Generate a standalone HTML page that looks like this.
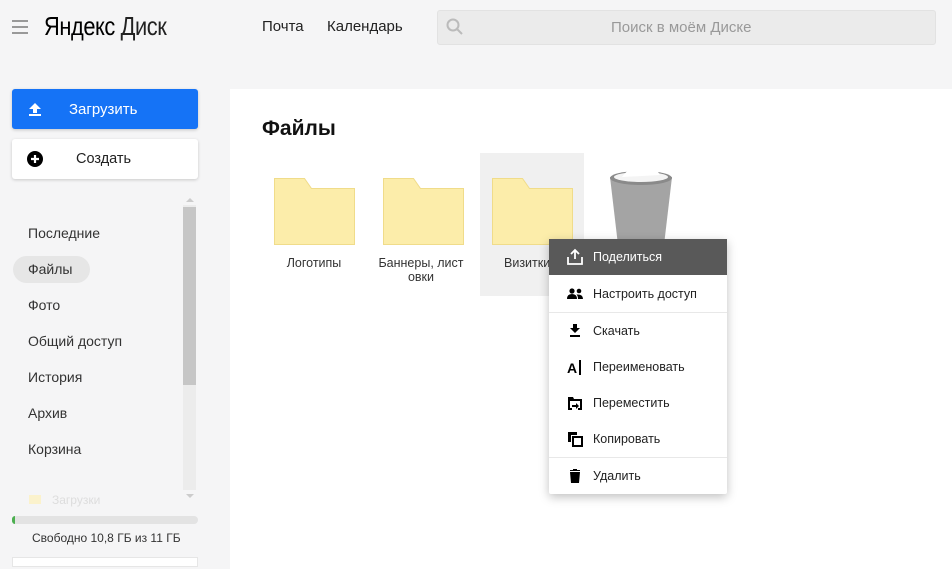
<!DOCTYPE html>
<html><head><meta charset="utf-8"><style>
*{margin:0;padding:0;box-sizing:border-box}
body{width:952px;height:563px;overflow:hidden;background:#f5f5f6;font-family:"Liberation Sans",sans-serif;position:relative;color:#222}
.abs{position:absolute}
.nav{font-size:14px;color:#222}
.menu div.it{position:absolute;left:0;width:178px;height:36px;display:flex;align-items:center;font-size:12.5px;color:#222}
.menu svg{position:absolute;left:17px}
.menu span{position:absolute;left:44px}
</style></head><body>
<div class="abs" style="left:12px;top:20px;width:16px;height:2px;background:#999"></div>
<div class="abs" style="left:12px;top:26px;width:16px;height:2px;background:#999"></div>
<div class="abs" style="left:12px;top:32px;width:16px;height:2px;background:#999"></div>
<div class="abs" style="left:44px;top:11px;font-size:26px;color:#000;transform:scaleX(0.84);transform-origin:left;letter-spacing:-0.5px;white-space:nowrap">Яндекс <span style="font-weight:300;color:#222">Диск</span></div>
<div class="abs nav" style="left:262px;top:18px;font-size:15px">Почта</div>
<div class="abs nav" style="left:327px;top:18px;font-size:15px">Календарь</div>
<div class="abs" style="left:437px;top:10px;width:499px;height:35px;background:#ebebeb;border-radius:3px;border:1px solid #e2e2e2"></div>
<svg class="abs" style="left:446px;top:18px" width="18" height="18"><circle cx="7" cy="7" r="5.5" fill="none" stroke="#bbb" stroke-width="2"/><line x1="11" y1="11" x2="16" y2="16" stroke="#bbb" stroke-width="2"/></svg>
<div class="abs" style="left:611px;top:19px;font-size:15px;color:#999">Поиск в моём Диске</div>

<div class="abs" style="left:12px;top:89px;width:186px;height:40px;background:#1573f6;border-radius:3px;box-shadow:0 1px 3px rgba(0,0,0,.2)"></div>
<svg class="abs" style="left:27px;top:101px" width="16" height="16"><path d="M8 2L2 8h4v4h4V8h4z" fill="#fff"/><rect x="2" y="13" width="12" height="2" fill="#fff"/></svg>
<div class="abs" style="left:69px;top:101px;font-size:15px;color:#fff">Загрузить</div>
<div class="abs" style="left:12px;top:139px;width:186px;height:40px;background:#fff;border-radius:3px;box-shadow:0 1px 3px rgba(0,0,0,.18)"></div>
<svg class="abs" style="left:26px;top:150px" width="18" height="18"><circle cx="9" cy="9" r="8" fill="#000"/><path d="M9 5v8M5 9h8" stroke="#fff" stroke-width="2.2"/></svg>
<div class="abs" style="left:76px;top:151px;font-size:14.5px">Создать</div>

<div class="abs" style="left:13px;top:256px;width:77px;height:27px;background:#e6e6e6;border-radius:14px"></div>
<div class="abs" style="left:28px;top:225px;font-size:14px;line-height:16px;color:#333">
<div style="height:36px">Последние</div><div style="height:36px">Файлы</div><div style="height:36px">Фото</div><div style="height:36px">Общий доступ</div><div style="height:36px">История</div><div style="height:36px">Архив</div><div style="height:36px">Корзина</div></div>
<div class="abs" style="left:52px;top:493px;font-size:12px;color:#ddd">Загрузки</div>
<div class="abs" style="left:29px;top:495px;width:12px;height:9px;background:#fbf2cc"></div>
<div class="abs" style="left:183px;top:205px;width:13px;height:285px;background:#ececec"></div>
<div class="abs" style="left:183px;top:207px;width:13px;height:178px;background:#c6c6c6"></div>
<div class="abs" style="left:186px;top:194px;border:4px solid transparent;border-bottom-color:#ccc"></div>
<div class="abs" style="left:186px;top:494px;border:4px solid transparent;border-top-color:#ccc"></div>
<div class="abs" style="left:12px;top:516px;width:186px;height:8px;background:#e3e3e3;border-radius:4px"></div>
<div class="abs" style="left:12px;top:516px;width:3px;height:8px;background:#4caf50;border-radius:4px 0 0 4px"></div>
<div class="abs" style="left:32px;top:531px;font-size:12px;color:#333">Свободно 10,8 ГБ из 11 ГБ</div>
<div class="abs" style="left:12px;top:557px;width:186px;height:10px;background:#fff;border:1px solid #e6e6e6"></div>

<div class="abs" style="left:230px;top:89px;width:722px;height:480px;background:#fff"></div>
<div class="abs" style="left:262px;top:117px;font-size:21px;font-weight:bold;color:#111">Файлы</div>
<div class="abs" style="left:480px;top:153px;width:104px;height:143px;background:#f0f0f0"></div>
<svg class="abs" style="left:274px;top:178px" width="81" height="68"><path d="M0.5 0.5h30l7 10h43v56h-80z" fill="#fcedaa" stroke="#f0dc8a"/></svg>
<svg class="abs" style="left:383px;top:178px" width="81" height="68"><path d="M0.5 0.5h30l7 10h43v56h-80z" fill="#fcedaa" stroke="#f0dc8a"/></svg>
<svg class="abs" style="left:492px;top:178px" width="81" height="68"><path d="M0.5 0.5h30l7 10h43v56h-80z" fill="#fcedaa" stroke="#f0dc8a"/></svg>
<div class="abs" style="left:274px;top:256px;width:80px;text-align:center;font-size:12.5px;color:#333">Логотипы</div>
<div class="abs" style="left:374px;top:256px;width:94px;text-align:center;font-size:12.5px;line-height:14px;color:#333">Баннеры, лист овки</div>
<div class="abs" style="left:504px;top:256px;font-size:12.5px;color:#333">Визитки</div>
<svg class="abs" style="left:608px;top:165px" width="66" height="80"><path d="M2 12 L64 12 L56 80 L10 80z" fill="#a4a4a4"/><ellipse cx="33" cy="13" rx="31" ry="7" fill="#8a8a8a"/><ellipse cx="33" cy="12" rx="27" ry="5" fill="#f4f4f4"/><path d="M14 12 Q22 0 36 3 Q48 2 52 10z" fill="#fff"/></svg>

<div class="abs menu" style="left:549px;top:239px;width:178px;height:255px;background:#fff;box-shadow:0 3px 10px rgba(0,0,0,.25);border-radius:2px">
<div class="it" style="top:0;background:#595959;color:#fff"><svg width="18" height="18"><path d="M9 2v9M5 6l4-4 4 4" stroke="#fff" stroke-width="1.8" fill="none"/><path d="M2 9v7h14V9" stroke="#fff" stroke-width="1.8" fill="none"/></svg><span style="color:#fff">Поделиться</span></div>
<div class="it" style="top:37px"><svg width="18" height="18"><circle cx="6" cy="6" r="2.6"/><circle cx="13" cy="6" r="2.3"/><path d="M1 14q0-5 5-5t5 5zM12 14q0-3-1.5-4.5Q17 9 17 14z"/></svg><span>Настроить доступ</span></div>
<div class="abs" style="left:0;top:73px;width:178px;height:1px;background:#e8e8e8"></div>
<div class="it" style="top:74px"><svg width="18" height="18"><path d="M9 11L4 6h3V2h4v4h3z"/><rect x="4" y="13" width="10" height="2"/></svg><span>Скачать</span></div>
<div class="it" style="top:110px"><svg width="18" height="18"><text x="1" y="15" font-size="14" font-weight="bold" font-family="Liberation Sans">A</text><rect x="13" y="2" width="2" height="15"/></svg><span>Переименовать</span></div>
<div class="it" style="top:146px"><svg width="18" height="18"><path d="M2 3h5l1 2h8v11h-4v-2h2V7H4v7h2v2H2z"/><path d="M6 11h4V9l3 3-3 3v-2H6z"/></svg><span>Переместить</span></div>
<div class="it" style="top:182px"><svg width="18" height="18"><path d="M2 2h9v3H5v7H2z"/><rect x="7" y="7" width="9" height="9" fill="none" stroke="#000" stroke-width="2"/></svg><span>Копировать</span></div>
<div class="abs" style="left:0;top:218px;width:178px;height:1px;background:#e8e8e8"></div>
<div class="it" style="top:219px"><svg width="18" height="18"><path d="M4 4h10v-1h-3v-1h-4v1H4zM4 5h10l-1 11H5z"/></svg><span>Удалить</span></div>
</div>
</body></html>
